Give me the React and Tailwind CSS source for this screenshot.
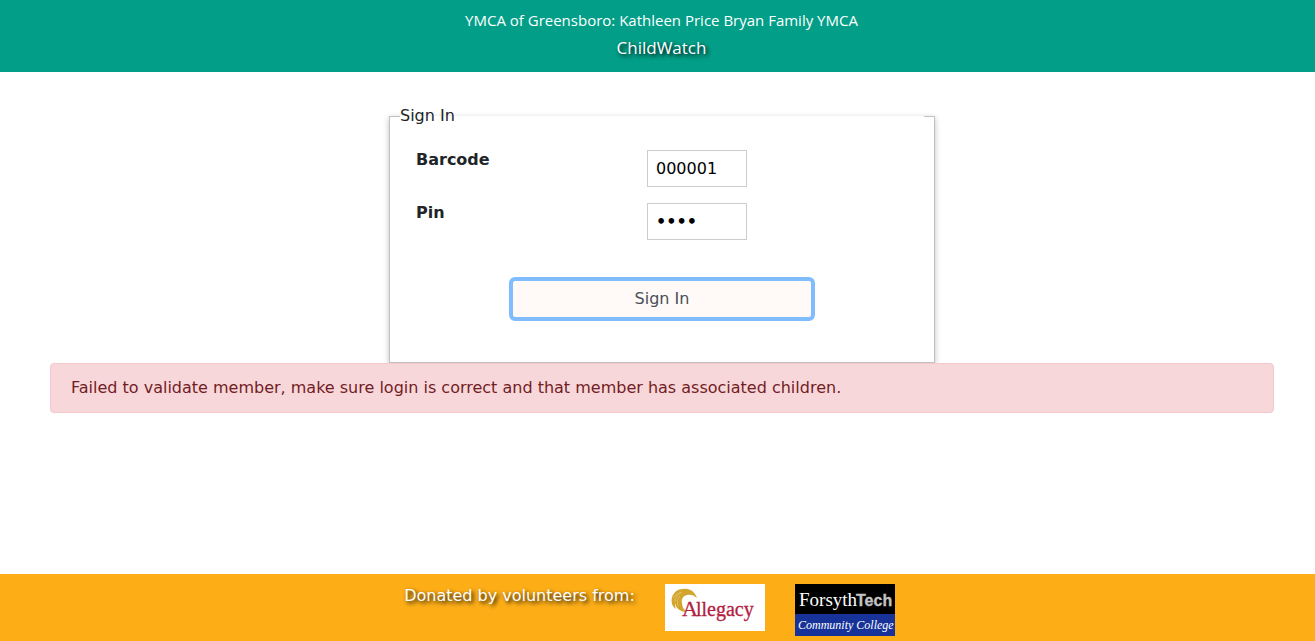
import React from "react";

function AllegacyLogo() {
  return (
    <svg role="img" aria-label="Allegacy" width="100" height="47" viewBox="0 0 100 47" className="block bg-white">
      <path
        d="M7 20C5 11 11 5 18 5c7-1 12 3 14 9-3-3-7-4-10-3-4 1-6 4-5 8 0 4 2 7 5 9-6 0-11-3-12-9 0 2 0 4 1 6-3-2-4-5-4-5z"
        fill="#d3a52f"
      />
      <path d="M8 14c2-3 5-5 9-6M10 18c0-4 2-7 6-9M13 22c-1-4-1-7 2-10" stroke="#ecd490" strokeWidth="0.5" fill="none" />
      <text x="17" y="32" fill="#b3203f" stroke="#b3203f" strokeWidth="0.3" fontFamily="Liberation Serif, serif" fontSize="22">A</text>
      <text x="31" y="32" fill="#b3203f" stroke="#b3203f" strokeWidth="0.3" fontFamily="Liberation Serif, serif" fontSize="20">llegacy</text>
    </svg>
  );
}

function ForsythTechLogo() {
  return (
    <svg role="img" aria-label="ForsythTech Community College" width="100" height="52" viewBox="0 0 100 52" className="block bg-black">
      <rect y="30" width="100" height="22" fill="#17339a" />
      <text x="4" y="22" fill="#ffffff" fontFamily="Liberation Serif, serif" fontSize="19">Forsyth</text>
      <text x="61" y="22" fill="#c4c4c4" stroke="#c4c4c4" strokeWidth="0.3" fontWeight="700" fontFamily="Liberation Sans, sans-serif" fontSize="16">Tech</text>
      <text x="3" y="45" fill="#ffffff" fontFamily="Liberation Serif, serif" fontStyle="italic" fontSize="12">Community College</text>
    </svg>
  );
}

const inputClass =
  "h-[37px] w-[100px] border border-[#cccccc] bg-white px-2 text-base text-black outline-none";

export default function App() {
  return (
    <div className="flex min-h-screen flex-col bg-white font-['Verdana','DejaVu_Sans',sans-serif] text-base text-[#212529]">
      <header className="flex flex-col items-center gap-1 bg-[#029e87] pt-2 pb-3 pl-2 text-center font-['Segoe_UI','Open_Sans',sans-serif] text-white">
        <div className="text-[15px] leading-6">YMCA of Greensboro: Kathleen Price Bryan Family YMCA</div>
        <h1 className="text-[17px] leading-6 [text-shadow:2px_2px_4px_#000000]">ChildWatch</h1>
      </header>

      <main className="flex grow flex-col items-center pt-8 pr-[41px] pb-8 pl-[50px]">
        <form className="w-[546px] max-w-full" onSubmit={(e) => e.preventDefault()}>
          <fieldset className="border border-[#c0c0c0] px-[10px] pb-[41px] shadow-[0_2px_6px_rgba(0,0,0,0.25)]">
            <legend className="w-full">Sign In</legend>
            <div className="flex flex-col gap-4 px-4 pt-[22px]">
              <div className="flex items-start">
                <label htmlFor="barcode" className="w-[231px] font-bold leading-5">Barcode</label>
                <input id="barcode" type="text" defaultValue="000001" className={inputClass} />
              </div>
              <div className="flex items-start">
                <label htmlFor="pin" className="w-[231px] font-bold leading-5">Pin</label>
                <input id="pin" type="password" defaultValue="1234" className={`${inputClass} font-bold`} />
              </div>
            </div>
            <div className="mt-[37px] flex justify-center">
              <button
                type="submit"
                className="h-11 w-[306px] rounded-md border-4 border-[#80bdff] bg-[#fff9f7] text-[#495057]"
              >
                Sign In
              </button>
            </div>
          </fieldset>
        </form>
        <div role="alert" className="relative w-full rounded border border-[#f5c6cb] bg-[#f8d7da] px-5 py-3 text-[#721c24]">
          Failed to validate member, make sure login is correct and that member has associated children.
        </div>
      </main>

      <footer className="flex items-start justify-center gap-[30px] bg-[#fdae17] pt-[10px] pr-4 pb-[5px]">
        <div className="text-white [text-shadow:2px_2px_4px_#000000]">Donated by volunteers from:</div>
        <AllegacyLogo />
        <ForsythTechLogo />
      </footer>
    </div>
  );
}
